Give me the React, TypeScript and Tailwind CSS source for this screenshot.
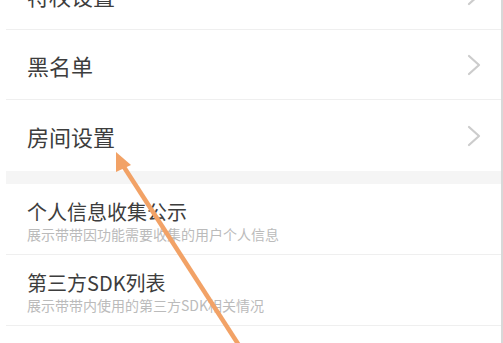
import React from 'react';

const font = { fontFamily: '"Noto Sans CJK SC", "Noto Sans", sans-serif' };

function Chevron() {
  return (
    <svg width="14" height="22" viewBox="0 0 14 22" className="shrink-0">
      <polyline points="2,2 12,11 2,20" fill="none" stroke="#cccccc" strokeWidth="2.2" strokeLinecap="round" strokeLinejoin="round" />
    </svg>
  );
}

function NavRow({ label, h, last }: { label: string; h: string; last?: boolean }) {
  return (
    <div className={`flex items-center justify-between pl-[21px] pr-[20px] ${h} ${last ? '' : 'border-b border-[#efefef]'}`}>
      <span className="text-[22px] leading-[28px] text-[#3d3d3d]">{label}</span>
      <Chevron />
    </div>
  );
}

function InfoRow({ title, desc }: { title: string; desc: string }) {
  return (
    <div className="h-[71px] pl-[21px] pt-[16px] border-b border-[#efefef]">
      <p className="text-[20px] leading-[24px] text-[#3d3d3d]">{title}</p>
      <p className="mt-[1px] text-[14px] leading-[18px] text-[#bbbbbb]">{desc}</p>
    </div>
  );
}

export default function App() {
  return (
    <div className="relative flex w-[503px] h-[343px] overflow-hidden bg-white" style={font}>
      <div className="flex-1 pl-[6px]">
        <div className="-mt-[40px]">
          <NavRow label="特权设置" h="h-[70px]" />
          <NavRow label="黑名单" h="h-[70px]" />
          <NavRow label="房间设置" h="h-[71px]" last />
          <div className="h-[13px] bg-[#f5f5f5]" />
          <InfoRow title="个人信息收集公示" desc="展示带带因功能需要收集的用户个人信息" />
          <InfoRow title="第三方SDK列表" desc="展示带带内使用的第三方SDK相关情况" />
        </div>
      </div>
      <div className="w-[2px] bg-[#d8d8d8]" />

      {/* annotation arrow */}
      <svg className="absolute inset-0 pointer-events-none" width="503" height="343" viewBox="0 0 503 343">
        <line x1="122" y1="164" x2="242" y2="350" stroke="#f2a266" strokeWidth="4.5" />
        <polygon points="116,152 131,165 116,172" fill="#f2a266" />
      </svg>
    </div>
  );
}
